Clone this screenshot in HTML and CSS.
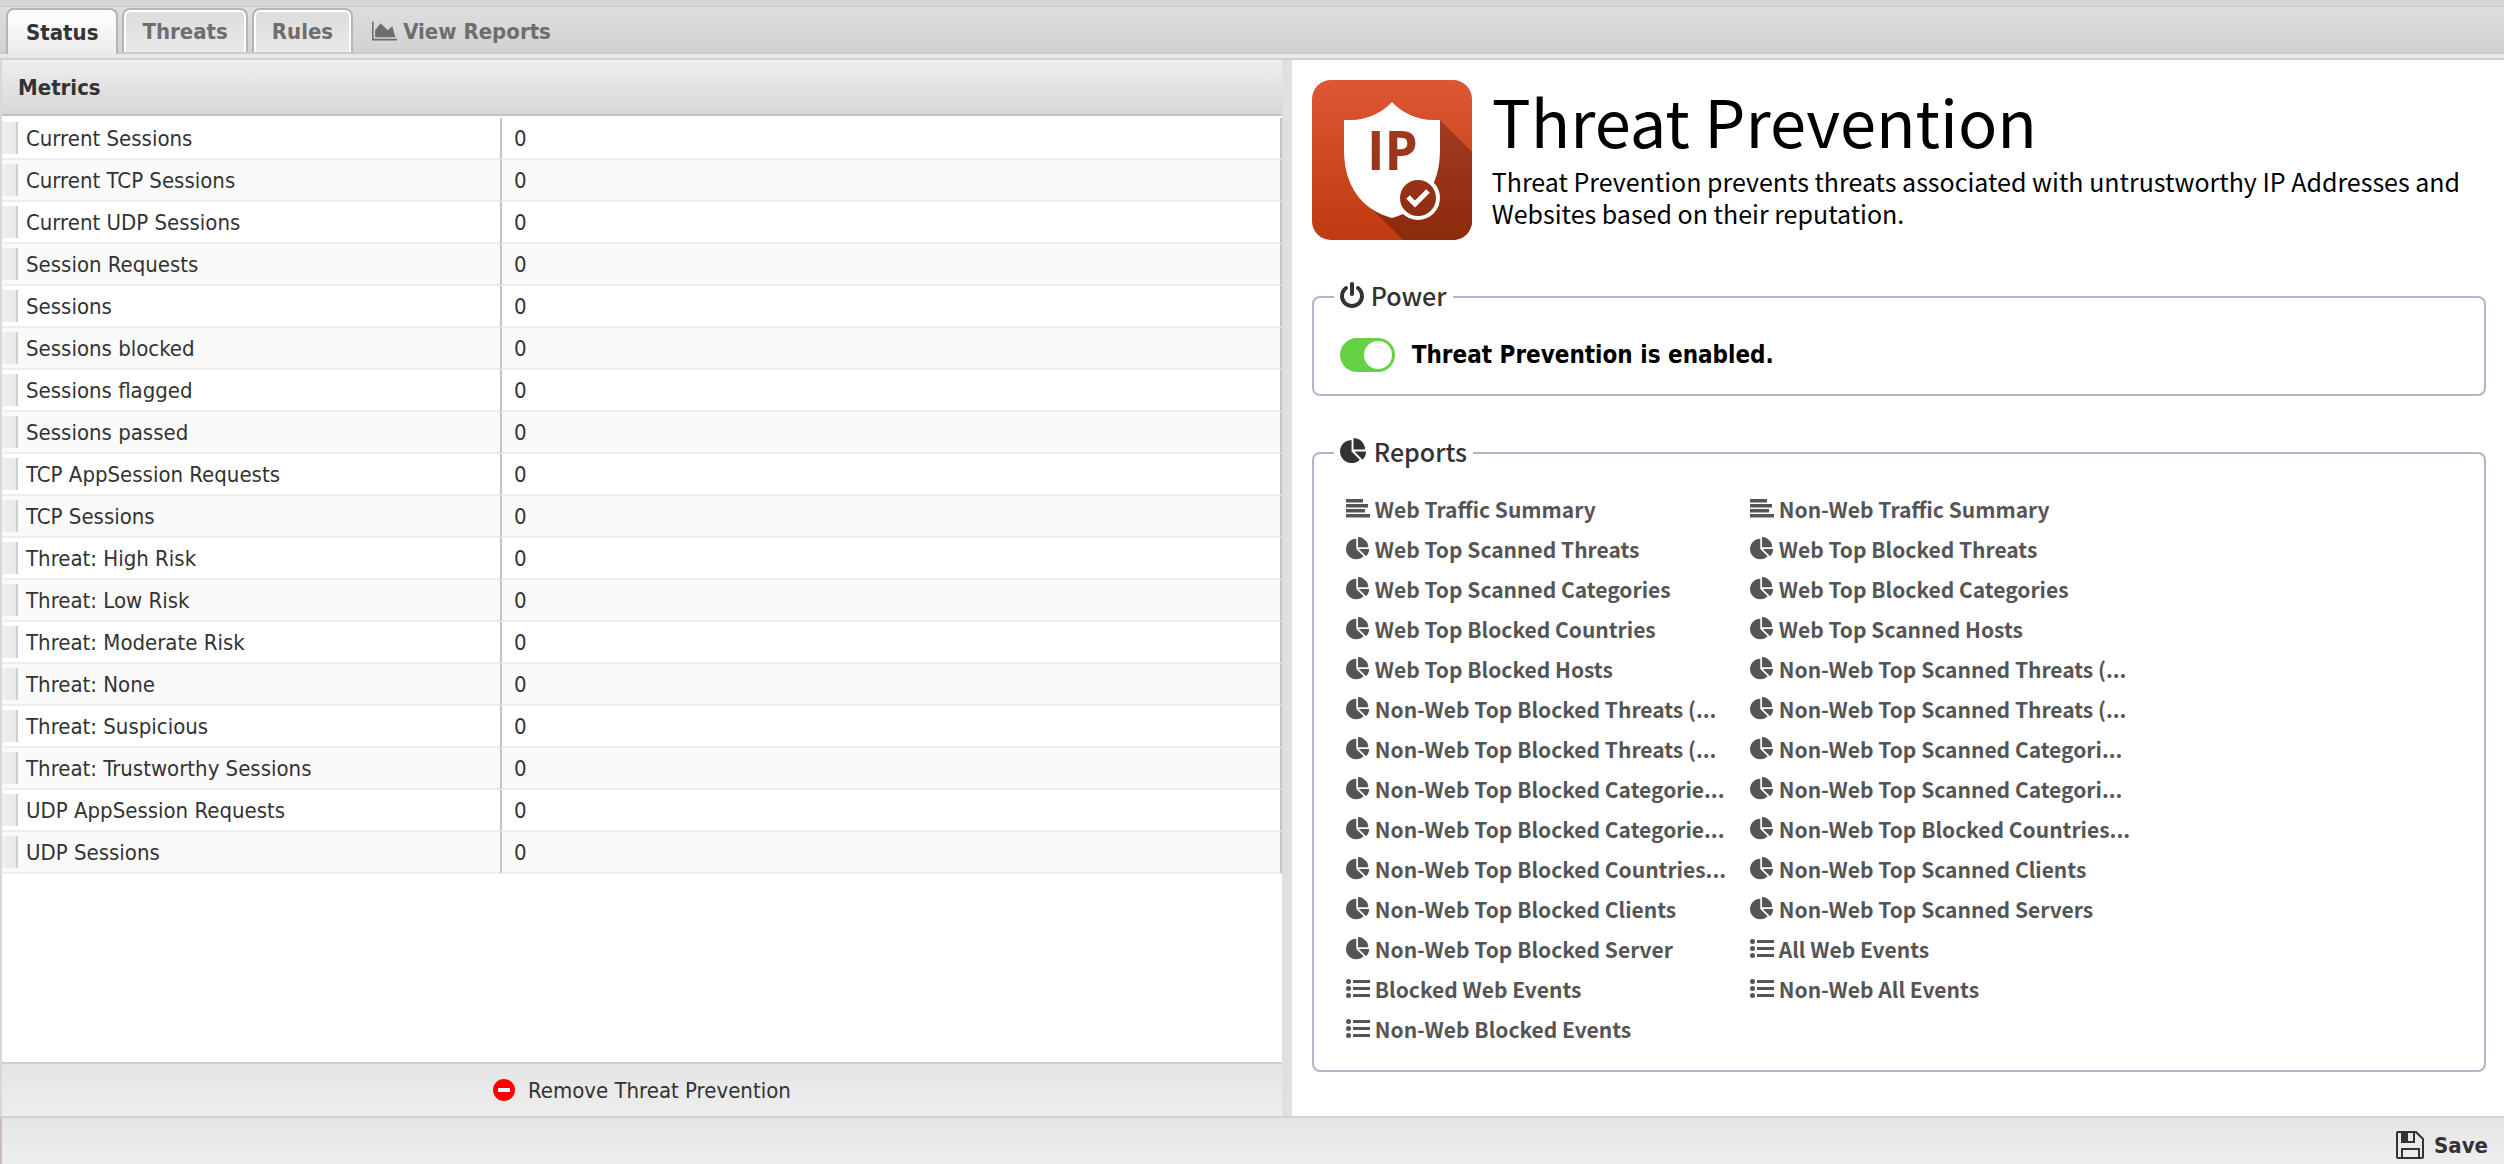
FILE: index.html
```
<!DOCTYPE html>
<html lang="en">
<head>
    <meta charset="UTF-8">
    <meta name="viewport" content="width=device-width, initial-scale=1.0">
    <title>Threat Prevention</title>
    <link rel="stylesheet" href="styles.css">
</head>
<body>

<svg class="sprite" aria-hidden="true">
    <symbol id="i-pie" viewBox="0 0 1792 1792">
        <path d="M768 890l546 546q-106 108-247.5 168t-298.5 60q-209 0-385.5-103t-279.5-279.5-103-385.5 103-385.5 279.5-279.5 385.5-103v762zm187 6h773q0 157-60 298.5t-168 247.5zm709-128h-768v-768q209 0 385.5 103t279.5 279.5 103 385.5z"/>
    </symbol>
    <symbol id="i-align" viewBox="0 0 24 24">
        <path d="M0 2h17v3.5H0zM0 7h22v3.5H0zM0 12h19v3.5H0zM0 17h24v3.5H0z"/>
    </symbol>
    <symbol id="i-list" viewBox="0 0 24 24">
        <circle cx="2.5" cy="4.5" r="2.5"/>
        <circle cx="2.5" cy="11.5" r="2.5"/>
        <circle cx="2.5" cy="18.5" r="2.5"/>
        <path d="M7 3h17v3H7zM7 10h17v3H7zM7 17h17v3H7z"/>
    </symbol>
</svg>

<nav class="tabs">
    <button class="tab active">Status</button>
    <button class="tab">Threats</button>
    <button class="tab">Rules</button>
    <a class="view-reports" href="#reports">
        <svg viewBox="0 0 2048 1792"><path d="M2048 1536v128h-2048v-1536h128v1408h1920zm-384-1024l256 896h-1664v-576l448-576 576 576z"/></svg>
        View Reports
    </a>
</nav>

<div class="content">
    <section class="metrics">
        <h2>Metrics</h2>
        <div class="metrics-body">
            <table>
                <tbody>
                    <tr><td class="handle"><span></span></td><th scope="row">Current Sessions</th><td>0</td></tr>
                    <tr><td class="handle"><span></span></td><th scope="row">Current TCP Sessions</th><td>0</td></tr>
                    <tr><td class="handle"><span></span></td><th scope="row">Current UDP Sessions</th><td>0</td></tr>
                    <tr><td class="handle"><span></span></td><th scope="row">Session Requests</th><td>0</td></tr>
                    <tr><td class="handle"><span></span></td><th scope="row">Sessions</th><td>0</td></tr>
                    <tr><td class="handle"><span></span></td><th scope="row">Sessions blocked</th><td>0</td></tr>
                    <tr><td class="handle"><span></span></td><th scope="row">Sessions flagged</th><td>0</td></tr>
                    <tr><td class="handle"><span></span></td><th scope="row">Sessions passed</th><td>0</td></tr>
                    <tr><td class="handle"><span></span></td><th scope="row">TCP AppSession Requests</th><td>0</td></tr>
                    <tr><td class="handle"><span></span></td><th scope="row">TCP Sessions</th><td>0</td></tr>
                    <tr><td class="handle"><span></span></td><th scope="row">Threat: High Risk</th><td>0</td></tr>
                    <tr><td class="handle"><span></span></td><th scope="row">Threat: Low Risk</th><td>0</td></tr>
                    <tr><td class="handle"><span></span></td><th scope="row">Threat: Moderate Risk</th><td>0</td></tr>
                    <tr><td class="handle"><span></span></td><th scope="row">Threat: None</th><td>0</td></tr>
                    <tr><td class="handle"><span></span></td><th scope="row">Threat: Suspicious</th><td>0</td></tr>
                    <tr><td class="handle"><span></span></td><th scope="row">Threat: Trustworthy Sessions</th><td>0</td></tr>
                    <tr><td class="handle"><span></span></td><th scope="row">UDP AppSession Requests</th><td>0</td></tr>
                    <tr><td class="handle"><span></span></td><th scope="row">UDP Sessions</th><td>0</td></tr>
                </tbody>
            </table>
        </div>
        <div class="toolbar">
            <button class="remove-button">
                <svg viewBox="0 0 22 22"><circle cx="11" cy="11" r="11" fill="#f00"/><rect x="5" y="9" width="12" height="4" rx="1" fill="#fff"/></svg>
                Remove Threat Prevention
            </button>
        </div>
    </section>

    <main class="details">
        <header class="app-header">
            <svg class="app-icon" viewBox="0 0 160 160">
                <defs>
                    <linearGradient id="tile" x1="0" y1="0" x2="0" y2="1">
                        <stop offset="0" stop-color="#dd5733"/>
                        <stop offset="1" stop-color="#bf3a10"/>
                    </linearGradient>
                    <linearGradient id="shade" gradientUnits="userSpaceOnUse" x1="0" y1="40" x2="0" y2="160">
                        <stop offset="0" stop-color="#a23b20"/>
                        <stop offset="1" stop-color="#8c2a0c"/>
                    </linearGradient>
                    <clipPath id="round"><rect width="160" height="160" rx="19"/></clipPath>
                </defs>
                <g clip-path="url(#round)">
                    <rect width="160" height="160" fill="url(#tile)"/>
                    <path d="M128 40L160 72V160H91L58 127Z" fill="url(#shade)"/>
                    <path d="M80 22C90 33 106 40 121 40H128V70C128 106 110 130 80 138C50 130 32 106 32 70V40H39C54 40 70 33 80 22Z" fill="#fff"/>
                    <text class="app-icon-text" x="55" y="90" fill="url(#shade)">IP</text>
                    <circle cx="106" cy="118" r="20" fill="url(#shade)" stroke="#fff" stroke-width="4"/>
                    <path d="M96 117L103 124L116 111" fill="none" stroke="#fff" stroke-width="5"/>
                </g>
            </svg>
            <div>
                <h1>Threat Prevention</h1>
                <p>Threat Prevention prevents threats associated with untrustworthy IP Addresses and Websites based on their reputation.</p>
            </div>
        </header>

        <fieldset class="power">
            <legend>
                <svg class="power-icon" viewBox="128 0 1536 1664"><path d="M1664 896q0 156-61 298t-164 245-245 164-298 61-298-61-245-164-164-245-61-298q0-182 80.5-343t226.5-270q43-32 95.5-25t83.5 50q32 42 24.5 94.5t-49.5 84.5q-98 74-151.5 181t-53.5 228q0 104 40.5 198.5t109.5 163.5 163.5 109.5 198.5 40.5 198.5-40.5 163.5-109.5 109.5-163.5 40.5-198.5q0-121-53.5-228t-151.5-181q-42-32-49.5-84.5t24.5-94.5q31-43 84-50t95 25q146 109 226.5 270t80.5 343zm-640-768v640q0 52-38 90t-90 38-90-38-38-90v-640q0-52 38-90t90-38 90 38 38 90z"/></svg>
                Power
            </legend>
            <label class="power-row">
                <input type="checkbox" class="toggle" checked>
                Threat Prevention is enabled.
            </label>
        </fieldset>

        <fieldset class="reports" id="reports">
            <legend>
                <svg class="reports-icon"><use href="#i-pie"/></svg>
                Reports
            </legend>
            <div class="report-list">
                <a href="#"><svg><use href="#i-align"/></svg>Web Traffic Summary</a>
                <a href="#"><svg><use href="#i-align"/></svg>Non-Web Traffic Summary</a>
                <a href="#"><svg><use href="#i-pie"/></svg>Web Top Scanned Threats</a>
                <a href="#"><svg><use href="#i-pie"/></svg>Web Top Blocked Threats</a>
                <a href="#"><svg><use href="#i-pie"/></svg>Web Top Scanned Categories</a>
                <a href="#"><svg><use href="#i-pie"/></svg>Web Top Blocked Categories</a>
                <a href="#"><svg><use href="#i-pie"/></svg>Web Top Blocked Countries</a>
                <a href="#"><svg><use href="#i-pie"/></svg>Web Top Scanned Hosts</a>
                <a href="#"><svg><use href="#i-pie"/></svg>Web Top Blocked Hosts</a>
                <a href="#"><svg><use href="#i-pie"/></svg>Non-Web Top Scanned Threats (...</a>
                <a href="#"><svg><use href="#i-pie"/></svg>Non-Web Top Blocked Threats (...</a>
                <a href="#"><svg><use href="#i-pie"/></svg>Non-Web Top Scanned Threats (...</a>
                <a href="#"><svg><use href="#i-pie"/></svg>Non-Web Top Blocked Threats (...</a>
                <a href="#"><svg><use href="#i-pie"/></svg>Non-Web Top Scanned Categori...</a>
                <a href="#"><svg><use href="#i-pie"/></svg>Non-Web Top Blocked Categorie...</a>
                <a href="#"><svg><use href="#i-pie"/></svg>Non-Web Top Scanned Categori...</a>
                <a href="#"><svg><use href="#i-pie"/></svg>Non-Web Top Blocked Categorie...</a>
                <a href="#"><svg><use href="#i-pie"/></svg>Non-Web Top Blocked Countries...</a>
                <a href="#"><svg><use href="#i-pie"/></svg>Non-Web Top Blocked Countries...</a>
                <a href="#"><svg><use href="#i-pie"/></svg>Non-Web Top Scanned Clients</a>
                <a href="#"><svg><use href="#i-pie"/></svg>Non-Web Top Blocked Clients</a>
                <a href="#"><svg><use href="#i-pie"/></svg>Non-Web Top Scanned Servers</a>
                <a href="#"><svg><use href="#i-pie"/></svg>Non-Web Top Blocked Server</a>
                <a href="#"><svg><use href="#i-list"/></svg>All Web Events</a>
                <a href="#"><svg><use href="#i-list"/></svg>Blocked Web Events</a>
                <a href="#"><svg><use href="#i-list"/></svg>Non-Web All Events</a>
                <a href="#"><svg><use href="#i-list"/></svg>Non-Web Blocked Events</a>
            </div>
        </fieldset>
    </main>
</div>

<footer class="footer">
    <button class="save-button">
        <svg viewBox="0 0 28 28">
            <path d="M2 1H20L27 8V26Q27 27 26 27H2Q1 27 1 26V2Q1 1 2 1Z" fill="none" stroke="#333" stroke-width="2"/>
            <path d="M6 1V11H18V1M6 27V18H23V27" fill="none" stroke="#333" stroke-width="2"/>
            <path d="M6 2H12V11H6Z" fill="#333"/>
        </svg>
        Save
    </button>
</footer>

</body>
</html>
```
FILE: styles.css
```
* {
    box-sizing: border-box;
}
body {
    font-family: "DejaVu Sans Condensed", "DejaVu Sans", sans-serif;
    font-size: 22px;
    color: #333;
    background-color: white;
    display: flex;
    flex-direction: column;
    height: 100vh;
    margin: 0;
    overflow: hidden;
}
button {
    font: inherit;
    color: inherit;
    background: none;
    border: none;
    padding: 0;
    cursor: pointer;
}
a {
    text-decoration: none;
}
svg {
    fill: currentColor;
    flex-shrink: 0;
}
.sprite {
    position: absolute;
    width: 0;
    height: 0;
}

/* tab bar */
.tabs {
    display: flex;
    align-items: flex-start;
    gap: 4px;
    height: 60px;
    padding: 2px 6px 0;
    border-top: 6px solid #d6d6d6;
    border-bottom: 2px solid #d0d0d0;
    background: linear-gradient(#dedede, #d2d2d2 46px, #cbcbcb 46px, #cbcbcb 48px, #e9e9e9 48px);
    font-weight: bold;
    box-shadow: inset 0 1px 0 #cdcdcd;
}
.tab {
    height: 44px;
    padding: 0 18px;
    border: 2px solid #b5b5b5;
    border-bottom: none;
    border-radius: 8px 8px 0 0;
    background: linear-gradient(#dcdcdc, #e9e9e9);
    box-shadow: inset 0 2px 0 white, inset 2px 0 0 white, inset -2px 0 0 white;
    color: #6e6e6e;
}
.tab.active {
    height: 46px;
    background: linear-gradient(white, #ebebeb);
    box-shadow: none;
    color: #333;
}
.view-reports {
    display: flex;
    align-items: center;
    gap: 6px;
    height: 46px;
    margin-left: 15px;
    color: #6e6e6e;
}
.view-reports svg {
    width: 25px;
    height: 24px;
}

/* metrics panel */
.content {
    display: flex;
    flex: 1;
    min-height: 0;
    border-left: 2px solid #d8d8d8;
}
.metrics {
    display: flex;
    flex-direction: column;
    flex: 0 0 51.55%;
    border-right: 10px solid #e0e0e0;
}
.metrics h2 {
    margin: 0;
    padding: 0 16px;
    height: 56px;
    line-height: 56px;
    font-size: 22px;
    border-bottom: 2px solid #c2c2c2;
    background: linear-gradient(#efefef, #d6d6d6);
}
.metrics-body {
    flex: 1;
    padding-top: 2px;
    overflow: hidden;
}
table {
    width: 100%;
    table-layout: fixed;
    border-spacing: 0;
}
tr {
    height: 42px;
}
tr:nth-child(even) {
    background-color: #fafafa;
}
th, td {
    padding: 0 12px;
    border-bottom: 2px solid #ededed;
    font-weight: normal;
    text-align: left;
}
td {
    border-left: 2px solid #c4c4c4;
    border-right: 2px solid #c4c4c4;
}
th {
    width: 482px;
    padding: 0 8px;
}
.handle {
    width: 16px;
    padding: 0;
    border-left: none;
    border-right: none;
}
.handle span {
    display: block;
    height: 32px;
    border-right: 2px solid #d0d0d0;
    background: linear-gradient(to right, #eef0f2, #e6e8ea);
}
.toolbar {
    display: flex;
    justify-content: center;
    height: 54px;
    border-top: 2px solid #d0d0d0;
    background: linear-gradient(#e5e5e5, #eee);
}
.remove-button {
    display: flex;
    align-items: center;
    gap: 13px;
}
.remove-button svg {
    width: 22px;
    height: 22px;
}

/* details panel */
.details {
    flex: 1;
    padding: 20px 18px 0 20px;
    font-family: "Noto Sans CJK SC", "Noto Sans", sans-serif;
    overflow: hidden;
}
.app-header {
    display: flex;
    gap: 20px;
    color: black;
}
.app-icon {
    width: 160px;
    height: 160px;
}
.app-icon-text {
    font-family: "Open Sans", sans-serif;
    font-size: 53px;
    font-weight: bold;
}
.app-header h1 {
    margin: 0;
    padding-bottom: 5px;
    font-size: 65px;
    font-weight: normal;
    line-height: 80px;
}
.app-header p {
    margin: 0;
    font-size: 25px;
    line-height: 32px;
}
fieldset {
    margin: 0;
    padding: 0 26px;
    border: 2px solid #b4b4c8;
    border-radius: 8px;
}
legend {
    display: flex;
    align-items: center;
    gap: 7px;
    height: 36px;
    margin-left: -6px;
    padding: 0 6px 4px;
    font-size: 25px;
    font-weight: 500;
}
.power {
    margin-top: 39px;
    height: 117px;
}
.power-icon {
    width: 24px;
    height: 26px;
}
.power-row {
    display: flex;
    align-items: center;
    gap: 17px;
    height: 80px;
    color: black;
    font-family: "DejaVu Sans Condensed", "DejaVu Sans", sans-serif;
    font-size: 24px;
    font-weight: bold;
}
.toggle {
    appearance: none;
    display: flex;
    align-items: center;
    width: 55px;
    height: 34px;
    margin: 0;
    padding: 0 3px;
    border-radius: 17px;
    background-color: #ccc;
}
.toggle::before {
    content: "";
    width: 28px;
    height: 28px;
    border-radius: 50%;
    background-color: white;
}
.toggle:checked {
    justify-content: flex-end;
    background-color: #64d244;
}
.reports {
    margin-top: 39px;
    padding: 0 32px 21px;
}
.reports legend {
    margin-left: -12px;
}
.reports-icon {
    width: 27px;
    height: 27px;
}
.report-list {
    display: grid;
    grid-template-columns: 404px 404px;
    grid-auto-rows: 40px;
    padding-top: 18px;
}
.report-list a {
    display: flex;
    align-items: center;
    gap: 5px;
    color: #555;
    font-size: 21px;
    font-weight: bold;
    white-space: nowrap;
}
.report-list svg {
    width: 24px;
    height: 24px;
}

/* footer */
.footer {
    display: flex;
    justify-content: flex-end;
    height: 48px;
    padding: 0 16px;
    border-top: 2px solid #d0d0d0;
    border-left: 2px solid #c8bcbc;
    background: linear-gradient(#e5e5e5, #eee);
    font-weight: bold;
}
.save-button {
    display: flex;
    align-items: center;
    gap: 10px;
    padding-top: 8px;
}
.save-button svg {
    width: 28px;
    height: 28px;
}
```
